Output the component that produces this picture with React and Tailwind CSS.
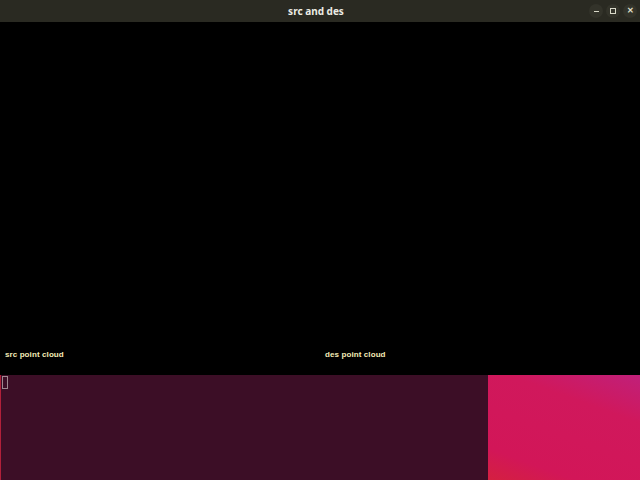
import React from "react";

export default function App() {
  return (
    <div className="w-[640px] h-[480px] flex flex-col overflow-hidden bg-black" style={{ fontFamily: '"Liberation Sans", sans-serif' }}>
      <div className="h-[22px] shrink-0 bg-[#2a2a22] flex items-center relative">
        <div className="flex-1 text-center text-[10px] font-bold text-[#ecece4] leading-none pr-[8px]" style={{ fontFamily: '"Noto Sans", sans-serif' }}>src and des</div>
        <div className="absolute right-[3px] top-[4px] flex gap-[3px]">
          <div className="w-[14px] h-[14px] rounded-full bg-[#33332a] flex items-center justify-center">
            <div className="w-[5px] h-[1px] bg-[#d8d8c8]" />
          </div>
          <div className="w-[14px] h-[14px] rounded-full bg-[#33332a] flex items-center justify-center">
            <div className="w-[6px] h-[6px] border border-[#d8d8c8]" />
          </div>
          <div className="w-[14px] h-[14px] rounded-full bg-[#33332a] flex items-center justify-center text-[#e0e0d0] text-[8px] font-bold leading-none">✕</div>
        </div>
      </div>
      <div className="h-[353px] shrink-0 bg-black flex items-end pb-[16px]">
        <div className="w-[320px] pl-[5px] text-[8px] font-bold text-[#f4ecb8] leading-none tracking-[0.1px]">src point cloud</div>
        <div className="w-[320px] pl-[5px] text-[8px] font-bold text-[#f4ecb8] leading-none tracking-[0.1px]">des point cloud</div>
      </div>
      <div className="flex-1 flex">
        <div className="w-[488px] bg-[#3c0e26] border-l border-[#b0203a] relative">
          <div className="absolute left-[1px] top-[1px] w-[6px] h-[13px] border border-[#a08890]" />
        </div>
        <div className="flex-1 bg-[linear-gradient(200deg,#c0207a_0%,#d0185c_30%,#d21658_80%,#d42040_100%)]" />
      </div>
    </div>
  );
}
